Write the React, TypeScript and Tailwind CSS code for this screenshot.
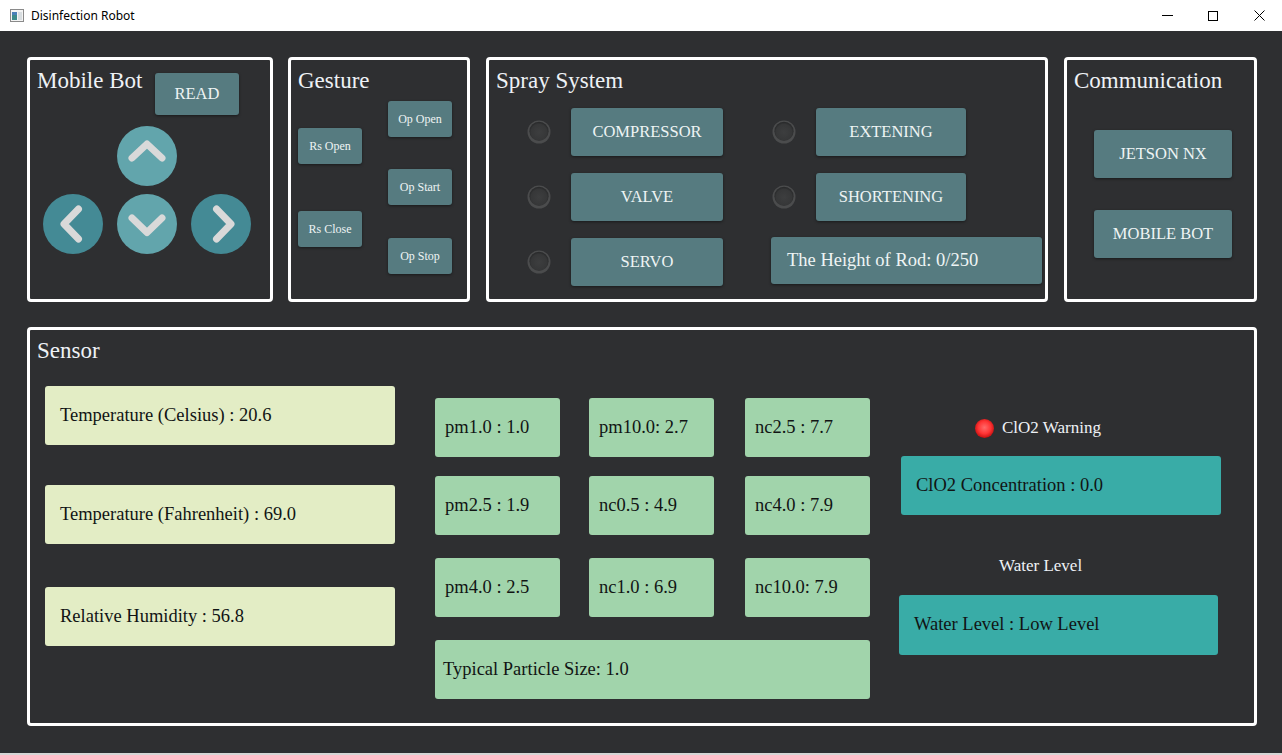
import React from "react";

const BTN =
  "bg-[#567b80] rounded-[3px] shadow-[0_1px_3px_rgba(0,0,0,0.45)] text-[#eef4f4] flex items-center justify-center shrink-0";
const PANEL = "border-[3px] border-white rounded-[4px] flex flex-col shrink-0";
const TITLE = "text-[23px] leading-[23px] text-[#eef2f6] ml-[7px] mt-[9px] whitespace-nowrap";
const BOX_TEXT = "text-[18.5px] text-[#111414] flex items-center whitespace-nowrap rounded-[3px]";

function Arrow({ dir, light }: { dir: "up" | "down" | "left" | "right"; light?: boolean }) {
  const pts = {
    up: "15,32 30,18 45,32",
    down: "15,24 30,38.5 45,24",
    left: "35.5,15 21,30 35.5,45",
    right: "25.5,15 40,30 25.5,45",
  }[dir];
  return (
    <svg width="60" height="60" viewBox="0 0 60 60" className="shrink-0 block">
      <circle cx="30" cy="30" r="30" fill={light ? "#62a5ac" : "#448a95"} />
      <polyline
        points={pts}
        fill="none"
        stroke="#d9d9d9"
        strokeWidth="7"
        strokeLinecap="round"
        strokeLinejoin="round"
      />
    </svg>
  );
}

function Led() {
  return (
    <svg width="24" height="24" viewBox="0 0 24 24" className="shrink-0 block">
      <defs>
        <radialGradient id="ledIn" cx="50%" cy="55%" r="55%">
          <stop offset="0%" stopColor="#3d3e3f" />
          <stop offset="75%" stopColor="#363738" />
          <stop offset="100%" stopColor="#252627" />
        </radialGradient>
      </defs>
      <circle cx="12" cy="12" r="11.5" fill="#4b4c4d" />
      <circle cx="12" cy="11.3" r="9.6" fill="url(#ledIn)" />
    </svg>
  );
}

function RedLed() {
  return (
    <svg width="19" height="19" viewBox="0 0 19 19" className="shrink-0 block">
      <defs>
        <radialGradient id="redIn" cx="50%" cy="45%" r="55%">
          <stop offset="0%" stopColor="#ff6a6a" />
          <stop offset="60%" stopColor="#ff3434" />
          <stop offset="100%" stopColor="#c41010" />
        </radialGradient>
      </defs>
      <circle cx="9.5" cy="9.5" r="9.5" fill="url(#redIn)" />
    </svg>
  );
}

function TitleBar() {
  return (
    <div className="h-[31px] bg-white flex items-center shrink-0 relative">
      <svg width="14" height="13" viewBox="0 0 14 13" className="ml-[10px] block">
        <rect x="0.5" y="0.5" width="13" height="12" fill="#f4f4f4" stroke="#8a8a8a" />
        <rect x="2" y="3" width="5" height="8" fill="#3d8a8a" />
        <rect x="2" y="3" width="5" height="3" fill="#4a7fb8" />
        <rect x="8" y="3" width="4" height="8" fill="#d8dde0" />
      </svg>
      <span className="ml-[7px] text-[12px] text-black font-['Noto_Sans',sans-serif]">
        Disinfection Robot
      </span>
      <div className="ml-auto flex h-full">
        <div className="w-[46px] h-full flex items-center justify-center">
          <div className="w-[11px] h-[1px] bg-black" />
        </div>
        <div className="w-[46px] h-full flex items-center justify-center">
          <div className="w-[10px] h-[10px] border border-black" />
        </div>
        <div className="w-[46px] h-full flex items-center justify-center">
          <svg width="11" height="11" viewBox="0 0 11 11" className="block">
            <path d="M0.5 0.5 L10.5 10.5 M10.5 0.5 L0.5 10.5" stroke="black" strokeWidth="1" />
          </svg>
        </div>
      </div>
    </div>
  );
}

function MobileBot() {
  return (
    <div className={PANEL + " w-[246px] h-[245px]"}>
      <div className="flex items-start">
        <div className={TITLE}>Mobile Bot</div>
        <div className={BTN + " ml-auto mr-[31px] mt-[13px] w-[84px] h-[42px] text-[16.5px]"}>READ</div>
      </div>
      <div className="ml-[87px] mt-[11px]">
        <Arrow dir="up" light />
      </div>
      <div className="flex gap-[14px] ml-[13px] mt-[8px]">
        <Arrow dir="left" />
        <Arrow dir="down" light />
        <Arrow dir="right" />
      </div>
    </div>
  );
}

function Gesture() {
  const g = BTN + " w-[64px] h-[36px] text-[12px]";
  return (
    <div className={PANEL + " ml-[15px] w-[182px] h-[245px]"}>
      <div className={TITLE}>Gesture</div>
      <div className="flex">
        <div className="flex flex-col ml-[7px] mt-[36px]">
          <div className={g}>Rs Open</div>
          <div className={g + " mt-[47px]"}>Rs Close</div>
        </div>
        <div className="flex flex-col ml-[26px] mt-[9px]">
          <div className={g}>Op Open</div>
          <div className={g + " mt-[32px]"}>Op Start</div>
          <div className={g + " mt-[33px]"}>Op Stop</div>
        </div>
      </div>
    </div>
  );
}

function Spray() {
  const b = BTN + " h-[48px] text-[16.5px]";
  return (
    <div className={PANEL + " ml-[16px] w-[562px] h-[245px]"}>
      <div className={TITLE}>Spray System</div>
      <div className="flex mt-[16px]">
        <div className="flex flex-col gap-[17px] ml-[38px]">
          {["COMPRESSOR", "VALVE", "SERVO"].map((t) => (
            <div key={t} className="flex items-center gap-[20px]">
              <Led />
              <div className={b + " w-[152px]"}>{t}</div>
            </div>
          ))}
        </div>
        <div className="flex flex-col ml-[48px]">
          <div className="flex items-center gap-[20px] pl-[1px]">
            <Led />
            <div className={b + " w-[150px]"}>EXTENING</div>
          </div>
          <div className="flex items-center gap-[20px] pl-[1px] mt-[17px]">
            <Led />
            <div className={b + " w-[150px]"}>SHORTENING</div>
          </div>
          <div className={BTN + " mt-[16px] w-[271px] h-[47px] !justify-start pl-[16px] text-[18.5px]"}>
            The Height of Rod: 0/250
          </div>
        </div>
      </div>
    </div>
  );
}

function Communication() {
  const b = BTN + " ml-[27px] w-[138px] h-[48px] text-[16.5px]";
  return (
    <div className={PANEL + " ml-[16px] w-[193px] h-[245px]"}>
      <div className={TITLE}>Communication</div>
      <div className={b + " mt-[38px]"}>JETSON NX</div>
      <div className={b + " mt-[32px]"}>MOBILE BOT</div>
    </div>
  );
}

function Sensor() {
  const y = BOX_TEXT + " bg-[#e3edc5] w-[350px] h-[59px] pl-[15px]";
  const c = BOX_TEXT + " bg-[#a1d4ab] w-[125px] h-[59px] pl-[10px]";
  const t = BOX_TEXT + " bg-[#39aca7] pl-[15px]";
  return (
    <div className={PANEL + " mt-[25px] w-[1230px] h-[399px]"}>
      <div className={TITLE}>Sensor</div>
      <div className="flex">
        <div className="flex flex-col ml-[15px] mt-[24px]">
          <div className={y}>Temperature (Celsius) : 20.6</div>
          <div className={y + " mt-[40px]"}>Temperature (Fahrenheit) : 69.0</div>
          <div className={y + " mt-[43px]"}>Relative Humidity : 56.8</div>
        </div>
        <div className="flex flex-col ml-[40px] mt-[36px]">
          <div className="flex">
            <div className={c}>pm1.0 : 1.0</div>
            <div className={c + " ml-[29px]"}>pm10.0: 2.7</div>
            <div className={c + " ml-[31px]"}>nc2.5 : 7.7</div>
          </div>
          <div className="flex mt-[19px]">
            <div className={c}>pm2.5 : 1.9</div>
            <div className={c + " ml-[29px]"}>nc0.5 : 4.9</div>
            <div className={c + " ml-[31px]"}>nc4.0 : 7.9</div>
          </div>
          <div className="flex mt-[23px]">
            <div className={c}>pm4.0 : 2.5</div>
            <div className={c + " ml-[29px]"}>nc1.0 : 6.9</div>
            <div className={c + " ml-[31px]"}>nc10.0: 7.9</div>
          </div>
          <div className={BOX_TEXT + " bg-[#a1d4ab] w-[435px] h-[59px] pl-[8px] mt-[23px]"}>
            Typical Particle Size: 1.0
          </div>
        </div>
        <div className="flex flex-col ml-[29px]">
          <div className="flex items-center h-[20px] ml-[76px] mt-[56px] gap-[8px]">
            <RedLed />
            <span className="text-[17px] leading-[20px] text-[#eef2f6] whitespace-nowrap">ClO2 Warning</span>
          </div>
          <div className={t + " ml-[2px] mt-[18px] w-[320px] h-[59px]"}>ClO2 Concentration : 0.0</div>
          <div className="ml-[100px] mt-[41px] text-[17px] leading-[20px] text-[#eef2f6] whitespace-nowrap">
            Water Level
          </div>
          <div className={t + " mt-[19px] w-[319px] h-[60px]"}>Water Level : Low Level</div>
        </div>
      </div>
    </div>
  );
}

export default function App() {
  return (
    <div className="w-[1282px] h-[755px] bg-[#2e2f31] flex flex-col overflow-hidden font-['Liberation_Serif',serif]">
      <TitleBar />
      <div className="flex-1 flex flex-col pl-[27px] pt-[26px]">
        <div className="flex">
          <MobileBot />
          <Gesture />
          <Spray />
          <Communication />
        </div>
        <Sensor />
      </div>
      <div className="h-[2px] bg-[#d6d6d6] shrink-0" />
    </div>
  );
}
